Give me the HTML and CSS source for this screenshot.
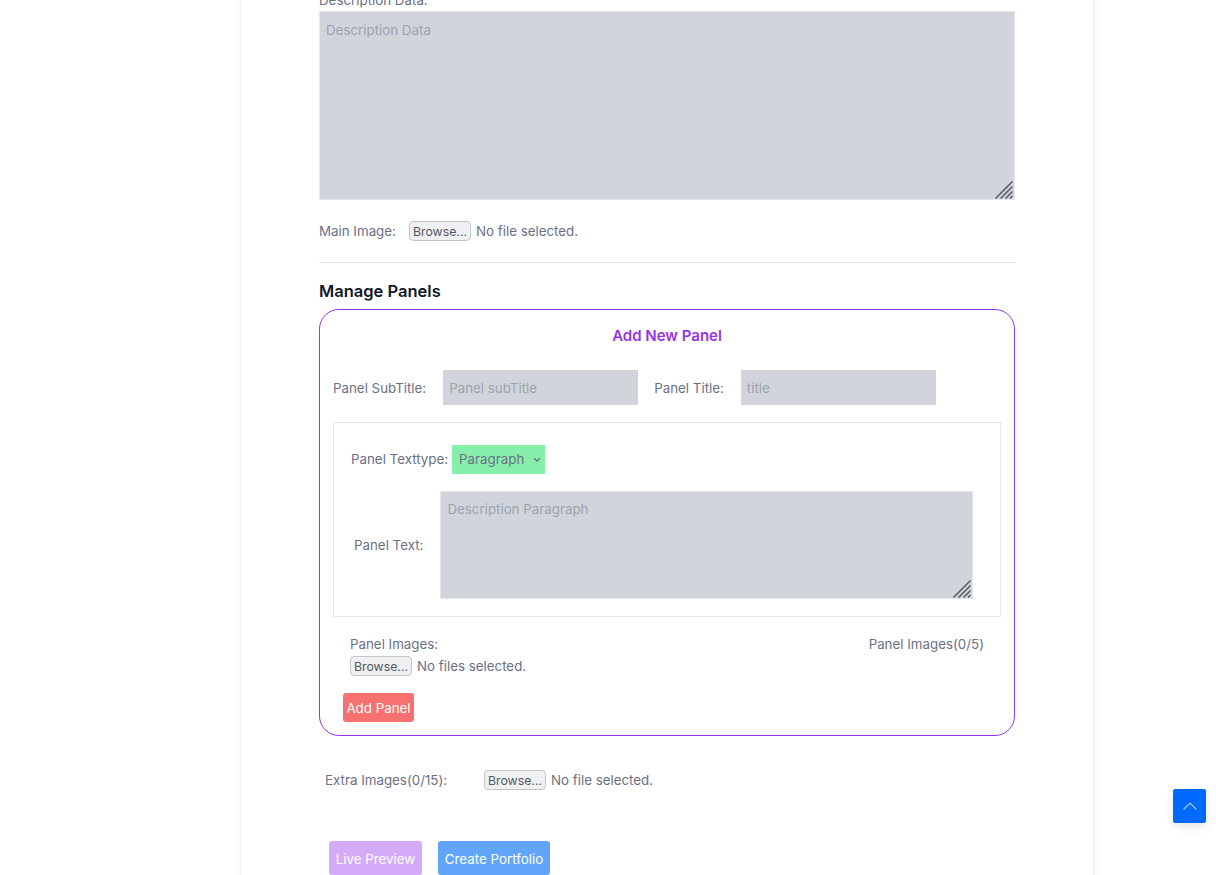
FILE: index.html
```html
<!DOCTYPE html>
<html lang="en">
<head>
<meta charset="utf-8">
<title>Create Portfolio</title>
<link rel="stylesheet" href="styles.css">
</head>
<body>
<main class="card">
  <form class="form">
    <label class="label desc-label">Description Data:</label>
    <div class="area-wrap main-area">
      <textarea class="area" placeholder="Description Data"></textarea>
      <svg class="grip" viewBox="0 0 18 18"><path d="M0.5 17.5 17.5 0.5M5.5 17.5 17.5 5.5M10.5 17.5 17.5 10.5M15 17.5 17.5 15"/></svg>
    </div>
    <div class="file-row main-image">
      <span class="label main-image-label">Main Image:</span>
      <button type="button" class="browse">Browse...</button>
      <span class="label">No file selected.</span>
    </div>
    <hr class="rule">
    <h2 class="heading">Manage Panels</h2>
    <section class="panel">
      <h3 class="panel-title">Add New Panel</h3>
      <div class="title-row">
        <label class="label">Panel SubTitle:</label>
        <input class="field" placeholder="Panel subTitle">
        <label class="label title-label">Panel Title:</label>
        <input class="field" placeholder="title">
      </div>
      <div class="text-box">
        <div class="type-row">
          <label class="label">Panel Texttype:</label>
          <div class="select">Paragraph
            <svg class="chev" viewBox="0 0 8 6"><path d="M1 1.2 4 4.2 7 1.2"/></svg>
          </div>
        </div>
        <div class="text-row">
          <label class="label">Panel Text:</label>
          <div class="area-wrap panel-area">
            <textarea class="area" placeholder="Description Paragraph"></textarea>
            <svg class="grip" viewBox="0 0 18 18"><path d="M0.5 17.5 17.5 0.5M5.5 17.5 17.5 5.5M10.5 17.5 17.5 10.5M15 17.5 17.5 15"/></svg>
          </div>
        </div>
      </div>
      <div class="images-row">
        <div>
          <div class="label images-label">Panel Images:</div>
          <div class="file-row">
            <button type="button" class="browse">Browse...</button>
            <span class="label">No files selected.</span>
          </div>
        </div>
        <span class="label">Panel Images(0/5)</span>
      </div>
      <button type="button" class="btn add-panel">Add Panel</button>
    </section>
    <div class="file-row extra">
      <span class="label extra-label">Extra Images(0/15):</span>
      <button type="button" class="browse">Browse...</button>
      <span class="label">No file selected.</span>
    </div>
    <div class="actions">
      <button type="button" class="btn preview">Live Preview</button>
      <button type="button" class="btn create">Create Portfolio</button>
    </div>
  </form>
</main>
<a class="to-top" href="#" aria-label="Back to top">
  <svg viewBox="0 0 16 10"><path d="M1.5 8.5 8 2l6.5 6.5"/></svg>
</a>
</body>
</html>
```
FILE: styles.css
```css
* { box-sizing: border-box; }
html, body { margin: 0; height: 875px; overflow: hidden; background: #fff; }
body { font-family: Inter, "Liberation Sans", sans-serif; font-size: 13.33px; line-height: 21px; color: #6c7085; }

.card {
  width: 854px;
  height: 960px;
  margin: -10px 0 0 240px;
  padding-left: 78px;
  background: #fff;
  border-left: 1px solid #f1f1f3;
  border-right: 1px solid #f1f1f3;
  box-shadow: 0 0 12px rgba(0, 0, 0, .04);
}
.form { width: 696px; display: flex; flex-direction: column; }
.label { color: #6c7085; white-space: nowrap; }
.desc-label { display: block; }

.area-wrap { position: relative; }
.main-area { height: 189px; }
.panel-area { width: 533px; height: 108px; margin-left: 17px; }
.area {
  display: block;
  width: 100%;
  height: 100%;
  resize: none;
  padding: 8px 6px;
  border: 1px solid #e5e7eb;
  border-radius: 0;
  outline: 0;
  background: #d1d5db;
  font: inherit;
  color: #6b7280;
}
.panel-area .area { padding-top: 7px; }
.area::placeholder, .field::placeholder { color: #9ca3af; opacity: 1; }
.grip { position: absolute; right: 2px; bottom: 1px; width: 18px; height: 18px; }
.grip path { fill: none; stroke: #55585f; stroke-width: 1.5; }

.file-row { display: flex; align-items: flex-start; }
.browse {
  width: 62px;
  height: 20px;
  margin-right: 5px;
  padding: 1px 0 0;
  border: 1px solid #c4c5ca;
  border-radius: 4px;
  background: #eff0f2;
  font: 12.3px/18px Inter, "Liberation Sans", sans-serif;
  color: #555862;
}
.main-image { margin-top: 21px; height: 21px; }
.main-image-label { width: 90px; }
.rule { width: 100%; height: 1px; margin: 20px 0 0; border: 0; background: #e5e7eb; }
.heading { margin: 18px 0 7px; font-size: 16.5px; line-height: 21px; font-weight: 600; color: #111827; }

.panel {
  height: 427px;
  padding: 15px 13px 0;
  border: 1px solid #9333ea;
  border-radius: 20px;
}
.panel-title { margin: 0; font-size: 15px; line-height: 21px; font-weight: 600; color: #9333ea; text-align: center; }
.title-row { display: flex; align-items: center; margin-top: 24px; height: 35px; }
.title-row .label { padding-top: 1px; }
.field {
  width: 195px;
  height: 35px;
  margin-left: 17px;
  padding: 0 6px;
  border: 0;
  border-radius: 0;
  outline: 0;
  background: #d1d5db;
  font: inherit;
  color: #6b7280;
}
.title-row .title-label { margin-left: 16px; }

.text-box { height: 195px; margin-top: 17px; padding: 22px 0 0 17px; border: 1px solid #e5e7eb; }
.type-row { display: flex; align-items: center; height: 29px; }
.select {
  display: flex;
  align-items: center;
  justify-content: space-between;
  width: 93px;
  height: 29px;
  margin-left: 4px;
  padding: 0 4px 0 7px;
  background: #86efac;
  color: #6c7085;
}
.chev { flex: none; width: 8px; height: 6px; }
.chev path { fill: none; stroke: #5b6570; stroke-width: 1.1; }
.text-row { display: flex; align-items: center; margin-top: 17px; padding-left: 3px; }

.images-row { display: flex; justify-content: space-between; align-items: flex-start; margin-top: 17px; padding: 0 17px; }
.images-label { height: 22px; }
.add-panel { display: block; margin: 16px 0 0 10px; width: 71px; background: #f87171; }

.btn {
  height: 29px;
  padding: 1px 0 0;
  border: 0;
  border-radius: 3px;
  font: 13.33px/21px Inter, "Liberation Sans", sans-serif;
  color: #fff;
}
.extra { margin: 34px 0 0 6px; height: 21px; }
.extra-label { width: 159px; }
.actions { display: flex; gap: 16px; margin: 50px 0 0 10px; }
.actions .btn { height: 34px; padding-top: 2px; }
.preview { width: 93px; background: #d4abf9; }
.create { width: 112px; background: #60a5fa; }

.to-top {
  position: fixed;
  left: 1173px;
  top: 789px;
  display: flex;
  align-items: center;
  justify-content: center;
  width: 33px;
  height: 34px;
  border-radius: 2px;
  background: #0069ff;
  box-shadow: 0 4px 10px rgba(0, 0, 0, .1);
}
.to-top svg { width: 16px; height: 10px; }
.to-top path { fill: none; stroke: #a9c9fb; stroke-width: 1.2; }
```
